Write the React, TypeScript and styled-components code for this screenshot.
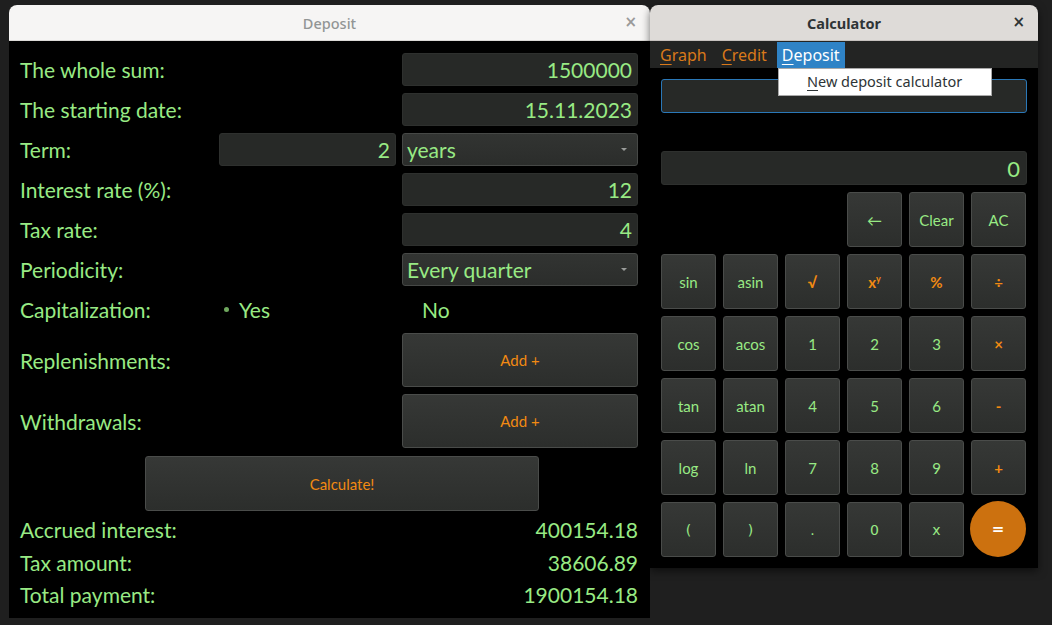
import React from 'react';
import styled, { createGlobalStyle } from 'styled-components';

const GlobalStyle = createGlobalStyle`
  html, body {
    margin: 0;
    padding: 0;
    background-color: #1f1f1f;
  }
  * {
    box-sizing: border-box;
  }
`;

const GREEN = '#98ea84';
const ORANGE = '#f28a12';

const Desktop = styled.div`
  display: flex;
  align-items: flex-start;
  width: 1052px;
  height: 625px;
  padding: 5px 0 0 9px;
  background-color: #1f1f1f;
  font-family: Lato, 'Noto Sans', sans-serif;
  overflow: hidden;
`;

const Window = styled.div<{ $w: number; $h: number; $shadow?: boolean }>`
  position: relative;
  display: flex;
  flex-direction: column;
  width: ${(p) => p.$w}px;
  height: ${(p) => p.$h}px;
  border-radius: 8px 8px 0 0;
  background-color: #000;
  box-shadow: ${(p) => (p.$shadow ? '0 3px 9px rgba(0, 0, 0, 0.55)' : 'none')};
`;

const TitleBar = styled.div<{ $active?: boolean }>`
  position: relative;
  display: flex;
  align-items: center;
  justify-content: center;
  height: 36px;
  flex-shrink: 0;
  border-radius: 8px 8px 0 0;
  background-color: ${(p) => (p.$active ? '#dedbd8' : '#f6f5f4')};
  border-bottom: 1px solid ${(p) => (p.$active ? '#c6c2be' : '#dcdad7')};
  font-family: 'Noto Sans', sans-serif;
  font-size: 14.5px;
  font-weight: ${(p) => (p.$active ? 700 : 500)};
  color: ${(p) => (p.$active ? '#2e3436' : '#929595')};
`;

const CloseBtn = styled.span<{ $active?: boolean }>`
  position: absolute;
  right: 13px;
  top: 9px;
  font-family: 'DejaVu Sans', sans-serif;
  font-size: 15px;
  font-weight: 700;
  line-height: 16px;
  color: ${(p) => (p.$active ? '#2e3436' : '#9a9a9a')};
`;

/* ---------- Deposit ---------- */

const DepositBody = styled.div`
  display: flex;
  flex-direction: column;
  padding: 12px 12px 0 11px;
`;

const FormGrid = styled.div`
  display: grid;
  grid-template-columns: 193px 177px 236px;
  column-gap: 6px;
  row-gap: 7px;
  align-items: center;
`;

const Label = styled.div<{ $span?: number }>`
  grid-column: span ${(p) => p.$span || 1};
  font-size: 21px;
  color: ${GREEN};
  line-height: 33px;
  white-space: nowrap;
`;

const Field = styled.div<{ $col?: number }>`
  grid-column: ${(p) => p.$col || 3};
  height: 33px;
  padding: 0 5px;
  display: flex;
  align-items: center;
  justify-content: flex-end;
  background-color: #272927;
  border: 1px solid #2e302e;
  border-radius: 3px;
  font-size: 21px;
  color: ${GREEN};
`;

const Combo = styled.div`
  grid-column: 3;
  height: 33px;
  padding: 0 10px 0 4px;
  display: flex;
  align-items: center;
  justify-content: space-between;
  background: linear-gradient(#323432, #2b2d2b);
  border: 1px solid #464846;
  border-radius: 3px;
  font-size: 21px;
  color: ${GREEN};
`;

const Arrow = styled.span`
  width: 0;
  height: 0;
  border-left: 3px solid transparent;
  border-right: 3px solid transparent;
  border-top: 3px solid #9a9c9a;
`;

const Radio = styled.div<{ $col: number }>`
  grid-column: ${(p) => p.$col};
  display: flex;
  align-items: center;
  height: 31px;
  font-size: 21px;
  color: ${GREEN};
`;

const RadioMark = styled.span<{ $on?: boolean }>`
  display: flex;
  align-items: center;
  justify-content: center;
  width: 14px;
  margin-right: 6px;
  &::after {
    content: '';
    width: 5px;
    height: 5px;
    border-radius: 50%;
    background-color: ${(p) => (p.$on ? '#6fa85e' : 'transparent')};
  }
`;

const ActionButton = styled.button<{ $col?: string }>`
  grid-column: ${(p) => p.$col || '3'};
  height: 54px;
  background: linear-gradient(#363836, #2c2e2c);
  border: 1px solid #4a4c4a;
  border-radius: 3px;
  font-family: Lato, 'Noto Sans', sans-serif;
  font-size: 15px;
  color: ${ORANGE};
  cursor: pointer;
`;

const CalcRow = styled.div`
  display: flex;
  margin-top: 8px;
  padding-left: 125px;
`;

const WideButton = styled(ActionButton)`
  width: 394px;
  height: 55px;
`;

const Results = styled.div`
  display: flex;
  flex-direction: column;
  margin-top: 3px;
`;

const ResultRow = styled.div`
  display: flex;
  justify-content: space-between;
  height: 32.5px;
  align-items: center;
  font-size: 21px;
  line-height: 28px;
  color: ${GREEN};
`;

/* ---------- Calculator ---------- */

const MenuBar = styled.div`
  display: flex;
  align-items: stretch;
  height: 27px;
  padding: 1px 0 0 5px;
  background-color: #232423;
  font-family: 'Noto Sans', sans-serif;
  font-size: 16px;
`;

const MenuItem = styled.div<{ $open?: boolean }>`
  display: flex;
  align-items: center;
  padding: 0 5px;
  margin-right: ${(p) => (p.$open ? 0 : 5)}px;
  color: ${(p) => (p.$open ? '#ffffff' : '#d9791a')};
  background-color: ${(p) => (p.$open ? '#2f83c6' : 'transparent')};
  & u {
    text-underline-offset: 3px;
  }
`;

const Dropdown = styled.div`
  position: absolute;
  left: 128px;
  top: 63px;
  width: 214px;
  height: 28px;
  display: flex;
  align-items: center;
  padding: 0 0 3px 28px;
  background-color: #ffffff;
  border: 1px solid #a9a9a9;
  font-family: 'Noto Sans', sans-serif;
  font-size: 14.5px;
  color: #2e3436;
  z-index: 2;
  & u {
    text-underline-offset: 3px;
  }
`;

const CalcBody = styled.div`
  display: flex;
  flex-direction: column;
  padding: 11px 11px 0 11px;
`;

const Display = styled.div<{ $focus?: boolean }>`
  height: 34px;
  display: flex;
  align-items: center;
  justify-content: flex-end;
  padding: 0 6px;
  background-color: #272927;
  border: 1px solid ${(p) => (p.$focus ? '#2a78b8' : '#2e302e')};
  border-radius: 3px;
  font-size: 22px;
  color: ${GREEN};
  margin-bottom: ${(p) => (p.$focus ? 38 : 7)}px;
`;

const Keys = styled.div`
  display: grid;
  grid-template-columns: repeat(6, 55px);
  grid-auto-rows: 55px;
  gap: 7px;
`;

const Key = styled.button<{ $op?: boolean; $mono?: boolean; $col?: number }>`
  grid-column: ${(p) => (p.$col ? p.$col : 'auto')};
  display: flex;
  align-items: center;
  justify-content: center;
  padding: 0;
  background: linear-gradient(#363836, #2c2e2c);
  border: 1px solid #4a4c4a;
  border-radius: 3px;
  font-family: ${(p) => (p.$mono ? "'DejaVu Sans', sans-serif" : "Lato, 'Noto Sans', sans-serif")};
  font-size: ${(p) => (p.$mono ? 14 : 15)}px;
  font-weight: ${(p) => (p.$op ? 700 : 400)};
  color: ${(p) => (p.$op ? ORANGE : GREEN)};
  cursor: pointer;
`;

const EqualKey = styled.button`
  width: 56px;
  height: 56px;
  margin: -1px 0 0 -1px;
  border: none;
  border-radius: 50%;
  background-color: #cc710f;
  color: #ffffff;
  font-family: 'DejaVu Sans', sans-serif;
  font-size: 15px;
  font-weight: 700;
  cursor: pointer;
`;

type K = { t: React.ReactNode; op?: boolean; mono?: boolean };

const keyRows: K[][] = [
  [{ t: 'sin' }, { t: 'asin' }, { t: '√', op: true }, { t: <span>x<sup style={{ fontSize: 9 }}>y</sup></span>, op: true }, { t: '%', op: true }, { t: '÷', op: true }],
  [{ t: 'cos' }, { t: 'acos' }, { t: '1' }, { t: '2' }, { t: '3' }, { t: '×', op: true }],
  [{ t: 'tan' }, { t: 'atan' }, { t: '4' }, { t: '5' }, { t: '6' }, { t: '-', op: true }],
  [{ t: 'log' }, { t: 'ln' }, { t: '7' }, { t: '8' }, { t: '9' }, { t: '+', op: true }],
  [{ t: '(', mono: true }, { t: ')', mono: true }, { t: '.', mono: true }, { t: '0', mono: true }, { t: 'x', mono: true }],
];

const App: React.FC = () => {
  return (
    <Desktop>
      <GlobalStyle />
      <Window $w={641} $h={613}>
        <TitleBar>
          Deposit
          <CloseBtn>×</CloseBtn>
        </TitleBar>
        <DepositBody>
          <FormGrid>
            <Label $span={2}>The whole sum:</Label>
            <Field>1500000</Field>
            <Label $span={2}>The starting date:</Label>
            <Field>15.11.2023</Field>
            <Label>Term:</Label>
            <Field $col={2}>2</Field>
            <Combo>
              years
              <Arrow />
            </Combo>
            <Label $span={2}>Interest rate (%):</Label>
            <Field>12</Field>
            <Label $span={2}>Tax rate:</Label>
            <Field>4</Field>
            <Label $span={2}>Periodicity:</Label>
            <Combo>
              Every quarter
              <Arrow />
            </Combo>
            <Label>Capitalization:</Label>
            <Radio $col={2}>
              <RadioMark $on />
              Yes
            </Radio>
            <Radio $col={3}>
              <RadioMark />
              No
            </Radio>
            <Label $span={2}>Replenishments:</Label>
            <ActionButton>Add +</ActionButton>
            <Label $span={2}>Withdrawals:</Label>
            <ActionButton>Add +</ActionButton>
          </FormGrid>
          <CalcRow>
            <WideButton>Calculate!</WideButton>
          </CalcRow>
          <Results>
            <ResultRow>
              <span>Accrued interest:</span>
              <span>400154.18</span>
            </ResultRow>
            <ResultRow>
              <span>Tax amount:</span>
              <span>38606.89</span>
            </ResultRow>
            <ResultRow>
              <span>Total payment:</span>
              <span>1900154.18</span>
            </ResultRow>
          </Results>
        </DepositBody>
      </Window>

      <Window $w={388} $h={563} $shadow>
        <TitleBar $active>
          Calculator
          <CloseBtn $active>×</CloseBtn>
        </TitleBar>
        <MenuBar>
          <MenuItem>
            <span><u>G</u>raph</span>
          </MenuItem>
          <MenuItem>
            <span><u>C</u>redit</span>
          </MenuItem>
          <MenuItem $open>
            <span><u>D</u>eposit</span>
          </MenuItem>
        </MenuBar>
        <Dropdown>
          <span><u>N</u>ew deposit calculator</span>
        </Dropdown>
        <CalcBody>
          <Display $focus />
          <Display>0</Display>
          <Keys>
            <Key $col={4}>←</Key>
            <Key>Clear</Key>
            <Key>AC</Key>
            {keyRows.flat().map((k, i) => (
              <Key key={i} $op={k.op} $mono={k.mono}>
                {k.t}
              </Key>
            ))}
            <EqualKey>=</EqualKey>
          </Keys>
        </CalcBody>
      </Window>
    </Desktop>
  );
};

export default App;
